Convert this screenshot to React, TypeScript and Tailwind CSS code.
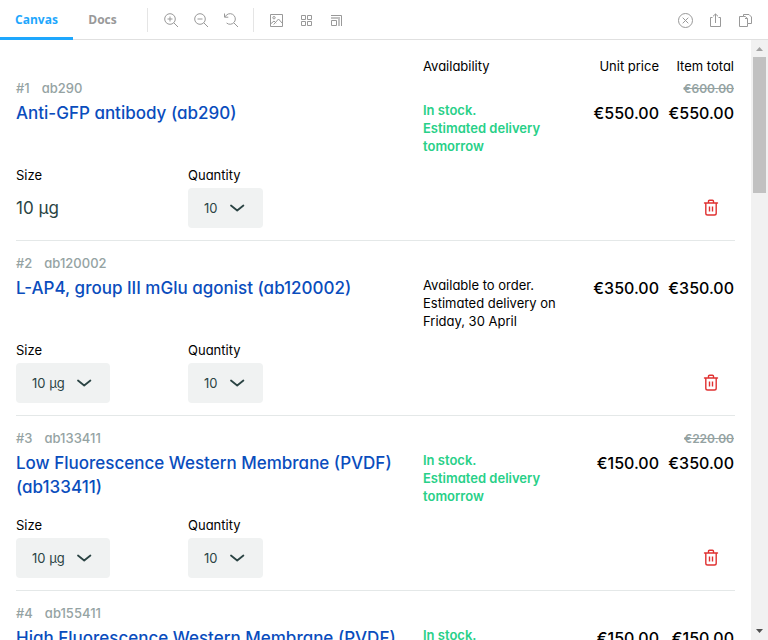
import { useId, useState } from "react";
import type { ReactNode } from "react";

type Item = {
  sku: string;
  name: string;
  stock: "in" | "order";
  availability: string[];
  was?: string;
  unit: string;
  total: string;
  fixedSize?: boolean;
};

const items: Item[] = [
  {
    sku: "ab290",
    name: "Anti-GFP antibody (ab290)",
    stock: "in",
    availability: ["In stock.", "Estimated delivery tomorrow"],
    was: "€600.00",
    unit: "€550.00",
    total: "€550.00",
    fixedSize: true,
  },
  {
    sku: "ab120002",
    name: "L-AP4, group III mGlu agonist (ab120002)",
    stock: "order",
    availability: ["Available to order.", "Estimated delivery on Friday, 30 April"],
    unit: "€350.00",
    total: "€350.00",
  },
  {
    sku: "ab133411",
    name: "Low Fluorescence Western Membrane (PVDF) (ab133411)",
    stock: "in",
    availability: ["In stock.", "Estimated delivery tomorrow"],
    was: "€220.00",
    unit: "€150.00",
    total: "€350.00",
  },
  {
    sku: "ab155411",
    name: "High Fluorescence Western Membrane (PVDF) (ab155411)",
    stock: "in",
    availability: ["In stock.", "Estimated delivery tomorrow"],
    unit: "€150.00",
    total: "€150.00",
  },
];

function ToolButton({ label, children }: { label: string; children: ReactNode }) {
  return (
    <button type="button" aria-label={label} className="flex h-7 w-7 items-center justify-center text-[#999999]">
      <svg width="16" height="16" viewBox="0 0 16 16" fill="none" stroke="currentColor" aria-hidden="true">
        {children}
      </svg>
    </button>
  );
}

function Separator() {
  return <div className="h-6 w-px shrink-0 bg-[#e5e5e5]" />;
}

function Toolbar() {
  return (
    <header className="flex h-10 shrink-0 items-stretch border-b border-[#e0e0e0] bg-white">
      <nav className="flex font-['Open_Sans',sans-serif] text-xs leading-4 font-bold">
        <button type="button" className="-mb-px w-[73px] border-b-[3px] border-[#1ea7fd] pt-[3px] text-[#1ea7fd]">
          Canvas
        </button>
        <button type="button" className="-mb-px w-[59px] border-b-[3px] border-transparent pt-[3px] text-[#999999]">
          Docs
        </button>
      </nav>
      <div className="ml-[15px] flex flex-1 items-center">
        <Separator />
        <div className="mr-2 ml-[9px] flex gap-0.5">
          <ToolButton label="Zoom in">
            <circle cx="7" cy="7" r="5.3" />
            <path d="M10.8 10.8 15 15M4.5 7h5M7 4.5v5" />
          </ToolButton>
          <ToolButton label="Zoom out">
            <circle cx="7" cy="7" r="5.3" />
            <path d="M10.8 10.8 15 15M4.5 7h5" />
          </ToolButton>
          <ToolButton label="Reset zoom">
            <path d="M2.2 4.8A5.3 5.3 0 1 1 3.6 11M1.5 1.5v3.7h3.8M10.8 10.8 15 15" />
          </ToolButton>
        </div>
        <Separator />
        <div className="mx-2 flex gap-0.5">
          <ToolButton label="Change background">
            <path d="M2.500 2.500h12v12h-12zM2.500 12l3.500-3 2.200 2.200M5.700 12.500l4.800-5.500 4 4.500" />
            <circle cx="6" cy="5.7" r="1.2" />
          </ToolButton>
          <ToolButton label="Apply grid">
            <path d="M3.500 3.500h4v4h-4zM9.500 3.500h4v4h-4zM3.500 9.500h4v4h-4zM9.500 9.500h4v4h-4z" />
          </ToolButton>
          <ToolButton label="Change viewport size">
            <path d="M3.500 8.500h5v5h-5zM3 3.500h10.500V14" />
            <path d="M3 6h8v8" strokeWidth="2" opacity="0.6" />
          </ToolButton>
        </div>
        <div className="mr-[9px] ml-auto flex gap-0.5">
          <ToolButton label="Close story">
            <circle cx="8.500" cy="8.500" r="7" />
            <path d="m5.700 5.700 5.600 5.600m0-5.600-5.600 5.600" />
          </ToolButton>
          <ToolButton label="Open in new tab">
            <path d="M5.500 5.500h-2v9h10v-9h-2M8.500 11V2M6 4.300 8.500 2 11 4.300" />
          </ToolButton>
          <ToolButton label="Copy link">
            <path d="M6.500 4.500h-4v10h8v-3M6.500 4.500h1.800l2.200 2.200M6.500 4.500v-2H12l2.500 2.500v6.500h-4v-5H8" />
          </ToolButton>
        </div>
      </div>
    </header>
  );
}

function SelectField({ label, value, width }: { label: string; value: string; width: string }) {
  const id = useId();
  const [current, setCurrent] = useState(value);
  return (
    <div className="flex flex-col items-start gap-1">
      <label htmlFor={id} className="text-[13px] leading-[18px]">{label}</label>
      <div className="relative">
        <select
          id={id}
          value={current}
          onChange={(e) => setCurrent(e.target.value)}
          className={`block h-10 appearance-none rounded bg-[#f0f2f2] px-4 pt-0.5 text-[13px] text-[#2b4444] ${width}`}
        >
          <option>{value}</option>
        </select>
        <svg
          className="pointer-events-none absolute top-2.5 right-4 text-[#2b4444]"
          width="20"
          height="20"
          viewBox="0 0 20 20"
          fill="none"
          stroke="currentColor"
          strokeWidth="1.8"
          aria-hidden="true"
        >
          <path d="m4 7.500 6.200 5 6.200-5" strokeLinecap="round" strokeLinejoin="round" />
        </svg>
      </div>
    </div>
  );
}

const columns = "grid grid-cols-[1fr_162px_75px_75px]";

function BasketItem({ item, index }: { item: Item; index: number }) {
  return (
    <li className={index === 0 ? "border-b border-[#e4e8e8] pb-3" : "border-b border-[#e4e8e8] pt-[13px] pb-3"}>
      <div className="flex h-5 items-center gap-3 text-[13px] font-medium text-[#95a3a3]">
        <span>#{index + 1}</span>
        <span>{item.sku}</span>
        {item.was && <s className="ml-auto pr-px text-xs font-semibold">{item.was}</s>}
      </div>
      <div className={`${columns} mt-0.5 min-h-[65px] items-start`}>
        <a href="#product" className="pr-4 text-[17px] leading-6 font-medium text-[#0a4dbd]">
          {item.name}
        </a>
        <div
          className={
            item.stock === "in"
              ? "pr-5 text-[13px] leading-[18px] font-semibold text-[#28d088]"
              : "pr-5 text-[13px] leading-[18px] text-black"
          }
        >
          {item.availability.map((line) => (
            <p key={line}>{line}</p>
          ))}
        </div>
        <span className="pr-px text-right text-base leading-6 font-medium">{item.unit}</span>
        <span className="pr-px text-right text-base leading-6 font-medium">{item.total}</span>
      </div>
      <div className="flex items-end">
        <div className="w-[172px]">
          {item.fixedSize ? (
            <div className="flex flex-col gap-1">
              <span className="text-[13px] leading-[18px]">Size</span>
              <span className="flex h-10 items-center pt-0.5 text-[17px] text-[#2b4444]">10 µg</span>
            </div>
          ) : (
            <SelectField label="Size" value="10 µg" width="w-[94px]" />
          )}
        </div>
        <SelectField label="Quantity" value="10" width="w-[75px]" />
        <button
          type="button"
          aria-label={`Remove ${item.name}`}
          className="ml-auto flex h-10 w-12 items-center justify-center text-[#e03131]"
        >
          <svg width="16" height="18" viewBox="0 0 16 18" fill="none" stroke="currentColor" strokeWidth="1.4" aria-hidden="true">
            <path d="M1.500 4h13M5.500 3.700V2.200q0-1 1-1h3q1 0 1 1v1.500M2.800 4.200v10q0 1.800 1.800 1.800h6.800q1.800 0 1.800-1.800v-10" strokeLinecap="round" />
            <path d="M6.500 7.500v5M9.500 7.500v5" />
          </svg>
        </button>
      </div>
    </li>
  );
}

function ScrollTrack() {
  return (
    <div aria-hidden="true" className="flex w-[17px] shrink-0 flex-col items-center bg-[#f1f1f1]">
      <svg width="17" height="17" viewBox="0 0 17 17" className="shrink-0">
        <path d="M5 11h7L8.500 7z" fill="#a3a3a3" />
      </svg>
      <div className="h-[136px] w-[13px] bg-[#c1c1c1]" />
      <svg width="17" height="17" viewBox="0 0 17 17" className="mt-auto shrink-0">
        <path d="M5 6h7L8.500 10z" fill="#505050" />
      </svg>
    </div>
  );
}

export default function App() {
  return (
    <div className="flex h-screen flex-col overflow-hidden bg-white font-['Inter',sans-serif] text-black [font-feature-settings:'cv11']">
      <Toolbar />
      <div className="flex min-h-0 flex-1">
        <main className="min-w-0 flex-1 overflow-hidden px-4 pt-4">
          <div className={`${columns} pb-[3px] text-[13px] leading-5`}>
            <span className="col-start-2">Availability</span>
            <span className="pr-px text-right">Unit price</span>
            <span className="pr-px text-right">Item total</span>
          </div>
          <ul>
            {items.map((item, i) => (
              <BasketItem key={item.sku} item={item} index={i} />
            ))}
          </ul>
        </main>
        <ScrollTrack />
      </div>
    </div>
  );
}
